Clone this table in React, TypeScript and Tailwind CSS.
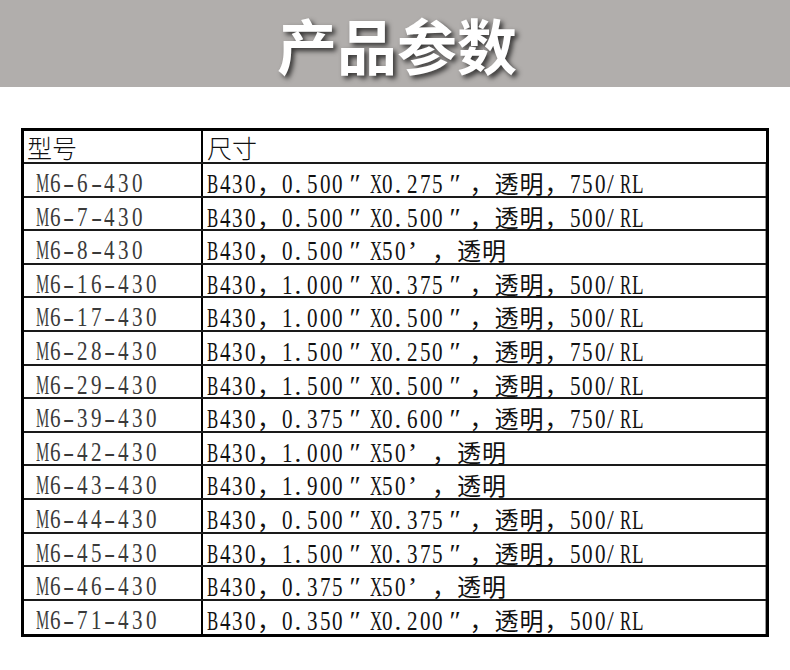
import React from "react";

const rows: [string, string][] = [
  ["M6-6-430", "B430，0.500″X0.275″，透明，750/RL"],
  ["M6-7-430", "B430，0.500″X0.500″，透明，500/RL"],
  ["M6-8-430", "B430，0.500″X50’，透明"],
  ["M6-16-430", "B430，1.000″X0.375″，透明，500/RL"],
  ["M6-17-430", "B430，1.000″X0.500″，透明，500/RL"],
  ["M6-28-430", "B430，1.500″X0.250″，透明，750/RL"],
  ["M6-29-430", "B430，1.500″X0.500″，透明，500/RL"],
  ["M6-39-430", "B430，0.375″X0.600″，透明，750/RL"],
  ["M6-42-430", "B430，1.000″X50’，透明"],
  ["M6-43-430", "B430，1.900″X50’，透明"],
  ["M6-44-430", "B430，0.500″X0.375″，透明，500/RL"],
  ["M6-45-430", "B430，1.500″X0.375″，透明，500/RL"],
  ["M6-46-430", "B430，0.375″X50’，透明"],
  ["M6-71-430", "B430，0.350″X0.200″，透明，500/RL"],
];

const scaleClass: Record<string, string> = {
  M: "[transform:scaleX(0.55)]",
  B: "[transform:scaleX(0.62)]",
  X: "[transform:scaleX(0.62)]",
  R: "[transform:scaleX(0.62)]",
  L: "[transform:scaleX(0.7)]",
  "-": "[transform:scaleX(1.25)]",
  "/": "[transform:scaleX(0.9)]",
  ".": "[transform:scaleX(1)]",
};

function isFull(c: string) {
  return /[\u3000-\u9fff\uff00-\uffef″’]/.test(c);
}

function isCjk(c: string) {
  return /[\u3000-\u9fff\uff00-\uffef]/.test(c);
}

function GridText({ text, col }: { text: string; col: 1 | 2 }) {
  return (
    <>
      {Array.from(text).map((c, i) => {
        if (isFull(c)) {
          let cls = "inline-block w-[25px] text-[24px] font-['Noto_Sans_CJK_SC',sans-serif]";
          if (c === "″") cls = "inline-block w-[25px] pl-[5px] text-left";
          if (c === "’") cls = "inline-block w-[25px] pl-[1px] text-left";
          return (
            <span key={i} className={cls}>
              {c}
            </span>
          );
        }
        return (
          <span
            key={i}
            className={col === 1 ? "inline-block w-[13.7px]" : "inline-block w-[12.5px]"}
          >
            <span
              className={
                "inline-block origin-left " +
                (scaleClass[c] ?? "[transform:scaleX(0.78)]")
              }
            >
              {c}
            </span>
          </span>
        );
      })}
    </>
  );
}

export default function App() {
  return (
    <div className="w-[790px] h-[670px] bg-white overflow-hidden">
      <div className="h-[87px] bg-[#b1aeac] flex justify-center pt-[14px] pl-[4px]">
        <h1 className="text-[60px] leading-[60px] font-bold text-white font-['Noto_Sans_CJK_SC',sans-serif] [text-shadow:3px_3px_5px_rgba(0,0,0,0.7)]">
          产品参数
        </h1>
      </div>
      <div className="pt-[41px] pl-[21px]">
        <div className="w-[748px] border-[3px] border-black text-[27px] leading-[24px] font-['Liberation_Serif','Noto_Sans_CJK_SC',serif]">
          <div className="flex h-[33px] border-b-2 border-[#1a1a1a] text-[#111]">
            <div className="w-[179px] shrink-0 border-r-2 border-black pl-[3px] pt-[4px] text-[25px] leading-[25px] font-['Noto_Sans_CJK_SC',sans-serif] font-light">
              型号
            </div>
            <div className="flex-1 pl-[4px] pt-[4px] text-[25px] leading-[25px] font-['Noto_Sans_CJK_SC',sans-serif] font-light">
              尺寸
            </div>
          </div>
          {rows.map(([model, spec], idx) => (
            <div
              key={model}
              className={
                idx === rows.length - 1
                  ? "flex h-[33.6px]"
                  : "flex h-[33.6px] border-b-2 border-[#1a1a1a]"
              }
            >
              <div className="w-[179px] shrink-0 border-r-2 border-black pl-[12px] pt-[7px] whitespace-nowrap text-[#3a3a3a]">
                <GridText text={model} col={1} />
              </div>
              <div className="flex-1 pl-[4px] pt-[7px] whitespace-nowrap text-[#111] border-r border-[#9a9a9a]">
                <GridText text={spec} col={2} />
              </div>
            </div>
          ))}
        </div>
      </div>
    </div>
  );
}
